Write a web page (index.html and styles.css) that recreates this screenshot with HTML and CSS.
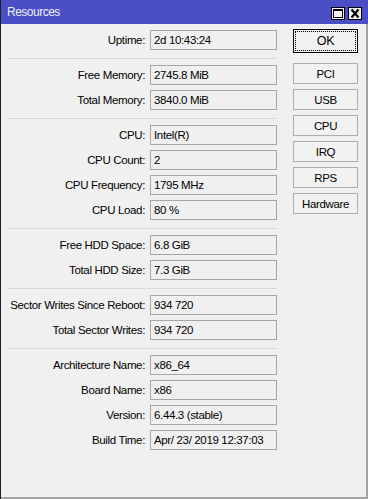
FILE: index.html
```html
<!DOCTYPE html>
<html>
<head>
<meta charset="utf-8">
<link rel="stylesheet" href="styles.css">
</head>
<body>
<div class="window">
  <div class="titlebar">
    <span class="title">Resources</span>
    <div class="tb-buttons">
      <span class="tb-btn"><svg width="12" height="11" viewBox="0 0 12 11"><rect x="1.5" y="1.5" width="9" height="8" fill="none" stroke="#000" stroke-width="1"/><rect x="1" y="1" width="10" height="2" fill="#000"/></svg></span>
      <span class="tb-btn"><svg width="12" height="11" viewBox="0 0 12 11"><path d="M2.5 1.5 L9.5 9.5 M9.5 1.5 L2.5 9.5" stroke="#000" stroke-width="2.2" fill="none"/></svg></span>
    </div>
  </div>
  <div class="body">
    <div class="fields">
      <div class="section">
        <div class="row"><span class="label">Uptime:</span><span class="value">2d 10:43:24</span></div>
      </div>
      <div class="section">
        <div class="row"><span class="label">Free Memory:</span><span class="value">2745.8 MiB</span></div>
        <div class="row"><span class="label">Total Memory:</span><span class="value">3840.0 MiB</span></div>
      </div>
      <div class="section">
        <div class="row"><span class="label">CPU:</span><span class="value">Intel(R)</span></div>
        <div class="row"><span class="label">CPU Count:</span><span class="value">2</span></div>
        <div class="row"><span class="label">CPU Frequency:</span><span class="value">1795 MHz</span></div>
        <div class="row"><span class="label">CPU Load:</span><span class="value">80 %</span></div>
      </div>
      <div class="section">
        <div class="row"><span class="label">Free HDD Space:</span><span class="value">6.8 GiB</span></div>
        <div class="row"><span class="label">Total HDD Size:</span><span class="value">7.3 GiB</span></div>
      </div>
      <div class="section">
        <div class="row"><span class="label">Sector Writes Since Reboot:</span><span class="value">934 720</span></div>
        <div class="row"><span class="label">Total Sector Writes:</span><span class="value">934 720</span></div>
      </div>
      <div class="section last">
        <div class="row"><span class="label">Architecture Name:</span><span class="value">x86_64</span></div>
        <div class="row"><span class="label">Board Name:</span><span class="value">x86</span></div>
        <div class="row"><span class="label">Version:</span><span class="value">6.44.3 (stable)</span></div>
        <div class="row"><span class="label">Build Time:</span><span class="value">Apr/ 23/ 2019 12:37:03</span></div>
      </div>
    </div>
    <div class="buttons">
      <div class="btn ok"><span class="focus">OK</span></div>
      <div class="group">
        <div class="btn">PCI</div>
        <div class="btn">USB</div>
        <div class="btn">CPU</div>
        <div class="btn">IRQ</div>
        <div class="btn">RPS</div>
        <div class="btn">Hardware</div>
      </div>
    </div>
  </div>
</div>
</body>
</html>
```
FILE: styles.css
```css
* { box-sizing: border-box; }
html, body { margin: 0; padding: 0; }
body {
  width: 368px;
  height: 499px;
  overflow: hidden;
  font-family: "Liberation Sans", Arial, sans-serif;
  font-size: 11.5px;
  letter-spacing: -0.35px;
  color: #000;
  background: #f0f0f0;
}
.window {
  width: 368px;
  height: 499px;
  display: flex;
  flex-direction: column;
  border-left: 1px solid #1e1e2a;
}
.titlebar {
  height: 24px;
  flex: none;
  background: #4b4fc6;
  display: flex;
  align-items: center;
  justify-content: space-between;
  padding: 0 6px 0 6px;
}
.title {
  color: #eeeefa;
  font-size: 12px;
  letter-spacing: -0.5px;
}
.tb-buttons {
  display: flex;
  gap: 3px;
  margin-top: 2px;
}
.tb-btn {
  width: 14px;
  height: 13px;
  background: #f2f2f2;
  border: 1px solid #000;
  display: flex;
  align-items: center;
  justify-content: center;
}
.tb-btn svg { display: block; }
.body {
  flex: 1;
  display: flex;
  background: #f0f0f0;
  border-right: 2px solid #a4a4a4;
  border-bottom: 2px solid #a4a4a4;
}
.fields {
  width: 276px;
  flex: none;
  padding-left: 7px;
}
.section {
  display: flex;
  flex-direction: column;
  gap: 5px;
  padding: 6px 0 8px 0;
  border-bottom: 1px solid #d9d9d9;
}
.section.last { border-bottom: none; }
.row {
  display: grid;
  grid-template-columns: minmax(0, 1fr) 127px;
  column-gap: 5px;
  height: 20px;
  align-items: center;
}
.label {
  text-align: right;
  white-space: nowrap;
}
.value {
  height: 20px;
  border: 1px solid #a6a6a6;
  background: #f0f0f0;
  padding-left: 3px;
  line-height: 18px;
  white-space: nowrap;
  overflow: hidden;
}
.buttons {
  margin-left: 16px;
  width: 65px;
  flex: none;
  padding-top: 5px;
  display: flex;
  flex-direction: column;
}
.btn {
  height: 21px;
  border: 1px solid #adadad;
  background: #f2f2f2;
  display: flex;
  align-items: center;
  justify-content: center;
  white-space: nowrap;
}
.btn.ok {
  height: 24px;
  border: 1px solid #000;
  padding: 1px;
  font-size: 12.5px;
}
.focus {
  flex: 1;
  align-self: stretch;
  display: flex;
  align-items: center;
  justify-content: center;
  border: 1px dotted #000;
}
.group {
  margin-top: 10px;
  display: flex;
  flex-direction: column;
  gap: 5px;
}
```
